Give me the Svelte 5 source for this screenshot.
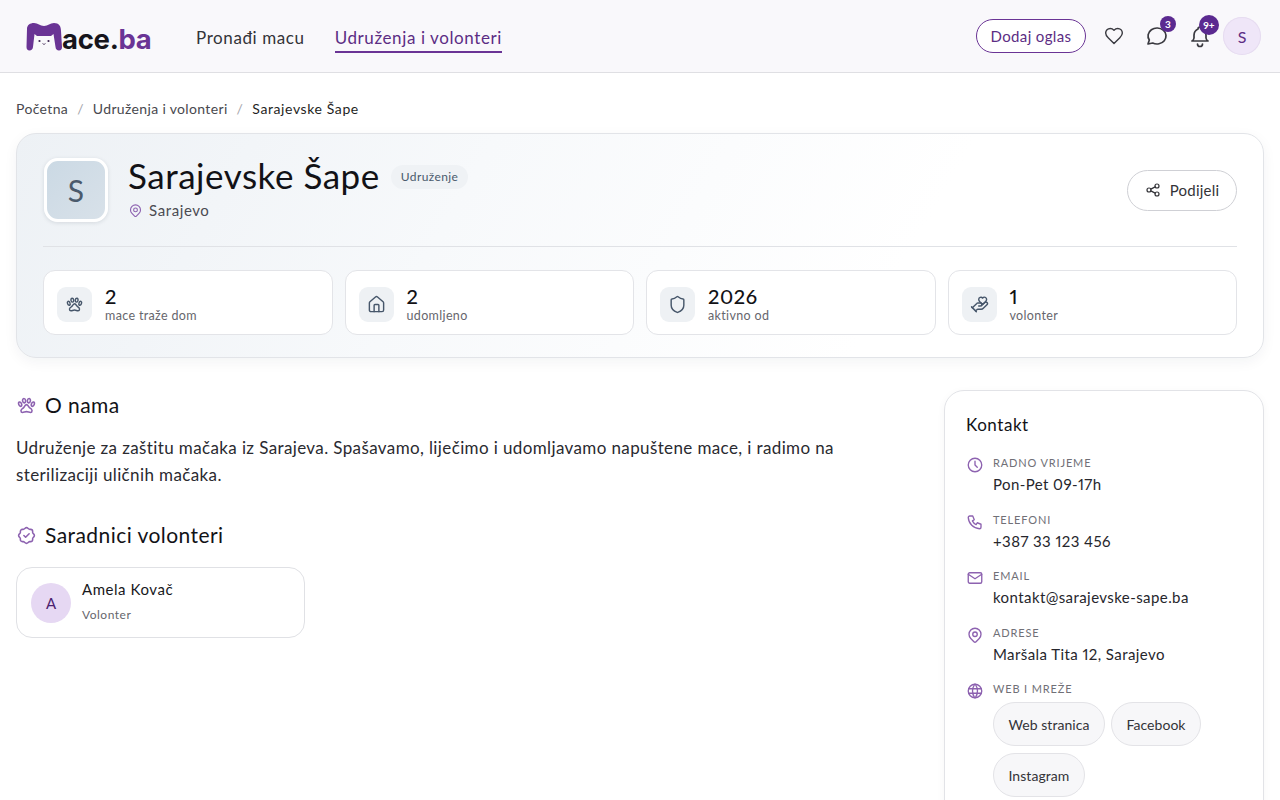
<script>
	const stats = [
		{ icon: 'paw', value: '2', label: 'mace traže dom' },
		{ icon: 'home', value: '2', label: 'udomljeno' },
		{ icon: 'shield', value: '2026', label: 'aktivno od' },
		{ icon: 'hand', value: '1', label: 'volonter' }
	];
	const contacts = [
		{ icon: 'clock', label: 'Radno vrijeme', value: 'Pon-Pet 09-17h' },
		{ icon: 'phone', label: 'Telefoni', value: '+387 33 123 456' },
		{ icon: 'mail', label: 'Email', value: 'kontakt@sarajevske-sape.ba' },
		{ icon: 'pin', label: 'Adrese', value: 'Maršala Tita 12, Sarajevo' }
	];
	const links = ['Web stranica', 'Facebook', 'Instagram'];
</script>

{#snippet icon(name)}
	<svg class="ic" viewBox="0 0 24 24" fill="none" stroke="currentColor" stroke-width="1.8" stroke-linecap="round" stroke-linejoin="round">
		{#if name === 'paw'}
			<path d="M14.7 13.5c-1.1-2-1.441-2.5-2.7-2.5-1.259 0-1.736.755-2.836 2.747-.942 1.703-2.846 1.845-3.321 3.291-.097.265-.145.677-.143.962 0 1.176.787 2 1.8 2 1.259 0 3-1 4.5-1s3.241 1 4.5 1c1.013 0 1.8-.823 1.8-2 0-.285-.049-.697-.146-.962-.475-1.451-2.512-1.744-3.454-3.538z" />
			<path d="M20.188 8.082a1.039 1.039 0 0 0-.406-.082h-.015c-.735.012-1.56.75-1.993 1.866-.519 1.335-.28 2.7.538 3.052.129.055.267.082.406.082.739 0 1.575-.742 2.011-1.866.516-1.335.273-2.7-.54-3.052z" />
			<path d="M9.474 9c.055 0 .109 0 .163-.011.944-.128 1.533-1.346 1.32-2.722C10.754 4.97 9.91 4 9.025 4c-.055 0-.109 0-.163.011-.944.128-1.533 1.346-1.32 2.722C7.746 8.026 8.59 9 9.475 9z" />
			<path d="M16.456 6.733c.214-1.376-.375-2.594-1.32-2.722A1.164 1.164 0 0 0 14.974 4c-.885 0-1.728.97-1.93 2.267-.214 1.376.375 2.594 1.32 2.722.054.007.108.011.162.011.885 0 1.73-.974 1.93-2.267z" />
			<path d="M5.69 12.918c.816-.352 1.054-1.719.536-3.052C5.79 8.742 4.955 8 4.217 8c-.14 0-.277.027-.407.082-.816.352-1.054 1.719-.536 3.052C3.71 12.258 4.545 13 5.283 13c.14 0 .277-.027.407-.082z" />
		{:else if name === 'home'}
			<path d="M15 21v-8a1 1 0 0 0-1-1h-4a1 1 0 0 0-1 1v8" />
			<path d="M3 10a2 2 0 0 1 .709-1.528l7-5.999a2 2 0 0 1 2.582 0l7 5.999A2 2 0 0 1 21 10v9a2 2 0 0 1-2 2H5a2 2 0 0 1-2-2z" />
		{:else if name === 'shield'}
			<path d="M20 13c0 5-3.5 7.5-7.66 8.95a1 1 0 0 1-.67-.01C7.5 20.5 4 18 4 13V6a1 1 0 0 1 1-1c2 0 4.5-1.2 6.24-2.72a1.17 1.17 0 0 1 1.52 0C14.51 3.81 17 5 19 5a1 1 0 0 1 1 1z" />
		{:else if name === 'hand'}
			<path d="M11 14h2a2 2 0 1 0 0-4h-3c-.6 0-1.1.2-1.4.6L3 16" />
			<path d="m7 20 1.6-1.4c.3-.4.8-.6 1.4-.6h4c1.1 0 2.1-.4 2.8-1.2l4.6-4.4a2 2 0 0 0-2.75-2.91l-4.2 3.9" />
			<path d="m2 15 6 6" />
			<path d="M19.5 8.5c.7-.7 1.5-1.6 1.5-2.7A2.73 2.73 0 0 0 16 4a2.78 2.78 0 0 0-5 1.8c0 1.2.8 2 1.5 2.8L16 12Z" />
		{:else if name === 'pin'}
			<path d="M9 11a3 3 0 1 0 6 0 3 3 0 0 0-6 0" />
			<path d="M17.657 16.657l-4.243 4.243a2 2 0 0 1-2.827 0l-4.244-4.243a8 8 0 1 1 11.314 0z" />
		{:else if name === 'clock'}
			<circle cx="12" cy="12" r="9" />
			<path d="M12 7v5l3 3" />
		{:else if name === 'phone'}
			<path d="M5 4h4l2 5-2.500 1.500a11 11 0 0 0 5 5l1.500-2.500 5 2v4a2 2 0 0 1-2 2A16 16 0 0 1 3 6a2 2 0 0 1 2-2" />
		{:else if name === 'mail'}
			<rect x="3" y="5" width="18" height="14" rx="2" />
			<path d="M3 7l9 6 9-6" />
		{:else if name === 'globe'}
			<circle cx="12" cy="12" r="9" />
			<path d="M3.600 9h16.800M3.600 15h16.800" />
			<path d="M11.500 3a17 17 0 0 0 0 18M12.500 3a17 17 0 0 1 0 18" />
		{:else if name === 'badge'}
			<path d="M5 7.200A2.200 2.200 0 0 1 7.200 5h1a2.200 2.200 0 0 0 1.550-.64l.7-.7a2.200 2.200 0 0 1 3.120 0l.7.7c.412.41.97.64 1.550.64h1A2.200 2.200 0 0 1 19 7.200v1c0 .58.23 1.138.64 1.550l.7.7a2.200 2.200 0 0 1 0 3.120l-.7.7a2.200 2.200 0 0 0-.64 1.550v1a2.200 2.200 0 0 1-2.200 2.200h-1a2.200 2.200 0 0 0-1.550.64l-.7.7a2.200 2.200 0 0 1-3.120 0l-.7-.7a2.200 2.200 0 0 0-1.550-.64h-1A2.200 2.200 0 0 1 5 16.800v-1a2.200 2.200 0 0 0-.64-1.550l-.7-.7a2.200 2.200 0 0 1 0-3.120l.7-.7A2.200 2.200 0 0 0 5 8.200v-1" />
			<path d="M9 12l2 2 4-4" />
		{:else if name === 'heart'}
			<path d="M19 14c1.490-1.460 3-3.210 3-5.500A5.500 5.500 0 0 0 16.500 3c-1.760 0-3 .5-4.500 2-1.500-1.500-2.740-2-4.500-2A5.500 5.500 0 0 0 2 8.500c0 2.300 1.500 4.050 3 5.500l7 7Z" />
		{:else if name === 'chat'}
			<path d="M3 20l1.300-3.900c-2.324-3.437-1.426-7.872 2.100-10.374 3.526-2.501 8.590-2.296 11.845.48 3.255 2.777 3.695 7.266 1.029 10.501-2.666 3.235-7.615 4.215-11.574 2.293L3 20" />
		{:else if name === 'bell'}
			<path d="M10 5a2 2 0 1 1 4 0 7 7 0 0 1 4 6v3a4 4 0 0 0 2 3H4a4 4 0 0 0 2-3v-3a7 7 0 0 1 4-6" />
			<path d="M9.500 20a2.500 2.500 0 0 0 5 0" />
		{:else if name === 'share'}
			<circle cx="6" cy="12" r="3" />
			<circle cx="18" cy="6" r="3" />
			<circle cx="18" cy="18" r="3" />
			<path d="M8.700 10.700l6.600-3.400M8.700 13.300l6.600 3.400" />
		{/if}
	</svg>
{/snippet}

<div class="page">
	<header class="topbar">
		<a class="logo" href="#top">
			<svg class="logo-mark" viewBox="0 0 36 28">
				<path fill="#6a3495" d="M1 6C1 2 4 0 8 0c4 0 6 3 10 3s6-3 10-3c5 0 7 3 7 8l1 16c0 2-1 3.500-3 3.500s-3.300-1.500-3.500-3.500L27.500 11 25 13h-14l-2.500-2L7 24c-.2 2-1.500 3.500-3.500 3.500S.5 26 .5 24z" />
				<circle cx="13.500" cy="18" r="1.100" fill="#3c2350" />
				<circle cx="22.500" cy="18" r="1.100" fill="#3c2350" />
				<path d="M16.500 20.500l1.500 1 1.500-1" fill="none" stroke="#3c2350" stroke-width=".8" />
			</svg>
			<span class="logo-text">ace.<b>ba</b></span>
		</a>
		<nav class="nav">
			<a href="#top">Pronađi macu</a>
			<a href="#top" class="active">Udruženja i volonteri</a>
		</nav>
		<div class="actions">
			<button class="add">Dodaj oglas</button>
			<span class="tool heart">{@render icon('heart')}</span>
			<span class="tool chat">{@render icon('chat')}<i class="badge">3</i></span>
			<span class="tool bell">{@render icon('bell')}<i class="badge wide">9+</i></span>
			<span class="me">S</span>
		</div>
	</header>

	<main class="content">
		<div class="crumbs">
			<a href="#top">Početna</a>
			<span class="sep">/</span>
			<a href="#top">Udruženja i volonteri</a>
			<span class="sep">/</span>
			<span class="current">Sarajevske Šape</span>
		</div>

		<section class="hero">
			<div class="hero-top">
				<div class="hero-logo"><span>S</span></div>
				<div class="hero-info">
					<div class="title-row">
						<h1>Sarajevske Šape</h1>
						<span class="tag">Udruženje</span>
					</div>
					<div class="place">{@render icon('pin')}Sarajevo</div>
				</div>
				<button class="share">{@render icon('share')}Podijeli</button>
			</div>
			<div class="stats">
				{#each stats as s}
					<div class="stat">
						<span class="stat-icon">{@render icon(s.icon)}</span>
						<div>
							<div class="stat-value">{s.value}</div>
							<div class="stat-label">{s.label}</div>
						</div>
					</div>
				{/each}
			</div>
		</section>

		<div class="columns">
			<div class="left">
				<h2>{@render icon('paw')}O nama</h2>
				<p class="about">
					Udruženje za zaštitu mačaka iz Sarajeva. Spašavamo, liječimo i udomljavamo napuštene mace, i radimo na
					sterilizaciji uličnih mačaka.
				</p>
				<h2 class="second">{@render icon('badge')}Saradnici volonteri</h2>
				<div class="member">
					<span class="member-av">A</span>
					<div class="member-text">
						<div class="member-name">Amela Kovač</div>
						<div class="member-role">Volonter</div>
					</div>
				</div>
			</div>

			<aside class="contact">
				<h3>Kontakt</h3>
				{#each contacts as c}
					<div class="row">
						{@render icon(c.icon)}
						<div>
							<div class="row-label">{c.label}</div>
							<div class="row-value">{c.value}</div>
						</div>
					</div>
				{/each}
				<div class="row">
					{@render icon('globe')}
					<div>
						<div class="row-label">Web i mreže</div>
						<div class="chips">
							{#each links as l}
								<a class="chip" href="#top">{l}</a>
							{/each}
						</div>
					</div>
				</div>
			</aside>
		</div>
	</main>
</div>

<style>
	:global(html) {
		overflow: hidden;
	}
	:global(body) {
		background: #fff;
	}
	.page {
		font-family: 'Lato', 'Noto Sans', sans-serif;
		font-variant-numeric: proportional-nums;
		color: #1f1f24;
		height: 800px;
		overflow: hidden;
	}
	a {
		color: inherit;
		text-decoration: none;
	}
	button {
		font-family: inherit;
		font-variant-numeric: inherit;
		cursor: pointer;
	}
	.ic {
		width: 20px;
		height: 20px;
		flex-shrink: 0;
		display: block;
	}

	.topbar {
		display: flex;
		align-items: center;
		height: 72px;
		background: #f9f8fb;
		border-bottom: 1px solid #dfdfe3;
		padding: 0 19px 0 26px;
	}
	.logo {
		display: flex;
		align-items: flex-end;
		width: 170px;
		height: 28px;
		margin-top: 2px;
	}
	.logo-mark {
		width: 36px;
		height: 28px;
		flex-shrink: 0;
	}
	.logo-text {
		font-family: 'Inter', sans-serif;
		font-weight: 700;
		font-size: 27.5px;
		line-height: 24px;
		letter-spacing: -0.3px;
		color: #17151c;
	}
	.logo-text b {
		color: #6a3495;
		font-weight: 700;
	}
	.nav {
		display: flex;
		gap: 30px;
		font-size: 17px;
		letter-spacing: 0.6px;
		color: #333338;
		margin-top: -2px;
	}
	.nav a {
		padding: 6px 0 3px;
		border-bottom: 2px solid transparent;
		margin-top: 3px;
	}
	.nav a.active {
		color: #5c2d84;
		border-bottom-color: #6a3495;
	}
	.actions {
		margin-left: auto;
		display: flex;
		align-items: center;
	}
	.add {
		height: 34px;
		width: 110px;
		border: 1px solid #6a3495;
		border-radius: 17px;
		background: #fff;
		color: #5c2d84;
		font-size: 15px;
		letter-spacing: 0.36px;
		padding: 0;
		margin-right: 18px;
	}
	.tool {
		position: relative;
		color: #3a3a40;
		margin-right: 23px;
	}
	.tool .ic {
		stroke-width: 1.7;
	}
	.tool.chat .ic,
	.tool.bell .ic {
		width: 24px;
		height: 24px;
		margin: -2px;
	}
	.tool.bell {
		margin-right: 13px;
	}
	.badge {
		position: absolute;
		z-index: 1;
		top: -10px;
		right: -9px;
		width: 16px;
		height: 16px;
		border-radius: 50%;
		background: #5b2a90;
		color: #fff;
		font-style: normal;
		font-weight: 700;
		font-size: 10px;
		line-height: 16px;
		text-align: center;
	}
	.badge.wide {
		width: 20px;
		height: 20px;
		line-height: 20px;
		top: -11px;
		right: -9px;
	}
	.me {
		width: 38px;
		height: 38px;
		border-radius: 50%;
		background: #efe6f8;
		box-shadow: inset 0 0 0 1px #e6dcf0;
		color: #5c2d84;
		font-size: 16px;
		display: flex;
		align-items: center;
		justify-content: center;
	}

	.content {
		padding: 0 16px;
	}
	.crumbs {
		display: flex;
		align-items: center;
		gap: 9px;
		height: 60px;
		box-sizing: border-box;
		padding-top: 11px;
		font-size: 14px;
		letter-spacing: 0.35px;
		color: #48484e;
	}
	.sep {
		color: #a5a5ab;
	}
	.current {
		color: #1f1f24;
		letter-spacing: 0.6px;
	}

	.hero {
		border: 1px solid #e2e4e8;
		border-radius: 20px;
		padding: 24px 26px 22px;
		background: linear-gradient(120deg, #edf1f5 0%, #f7f9fb 35%, #fff 70%);
		box-shadow: 0 4px 14px rgba(20, 30, 50, 0.05);
	}
	.hero-top {
		display: flex;
		align-items: center;
		padding-bottom: 24px;
		border-bottom: 1px solid #e0e2e6;
		margin-bottom: 23px;
	}
	.hero-logo {
		width: 64px;
		height: 64px;
		box-sizing: border-box;
		border: 3px solid #fff;
		border-radius: 14px;
		background: linear-gradient(135deg, #cbd9e4, #d8e1e9);
		box-shadow: 0 1px 4px rgba(20, 30, 50, 0.12);
		display: flex;
		align-items: center;
		justify-content: center;
		color: #4a5a6c;
		font-size: 30px;
		margin-left: 1px;
	}
	.hero-info {
		margin-left: 20px;
		margin-top: -6px;
	}
	.title-row {
		display: flex;
		align-items: center;
		gap: 11px;
	}
	h1 {
		margin: 0;
		font-size: 35px;
		line-height: 40px;
		font-weight: 400;
		letter-spacing: 0.53px;
		color: #121216;
	}
	.tag {
		font-size: 12px;
		letter-spacing: 0.4px;
		background: #eff2f5;
		color: #4a5a6c;
		height: 24px;
		line-height: 24px;
		padding: 0 10px;
		border-radius: 12px;
		margin-top: 4px;
	}
	.place {
		display: flex;
		align-items: center;
		gap: 6px;
		font-size: 15px;
		letter-spacing: 0.6px;
		color: #4b4b52;
		margin-top: 6px;
	}
	.place .ic {
		width: 15px;
		height: 15px;
		color: #8d62b0;
	}
	.share {
		margin-left: auto;
		width: 110px;
		height: 41px;
		display: flex;
		align-items: center;
		justify-content: center;
		gap: 9px;
		border: 1px solid #cfd0d5;
		border-radius: 21px;
		background: #fff;
		color: #333338;
		font-size: 15px;
		letter-spacing: 0.2px;
		padding: 0;
	}
	.share .ic {
		width: 16px;
		height: 16px;
	}

	.stats {
		display: grid;
		grid-template-columns: repeat(4, 1fr);
		gap: 12px;
	}
	.stat {
		display: flex;
		align-items: center;
		gap: 13px;
		background: #fff;
		border: 1px solid #e3e4e8;
		border-radius: 12px;
		padding: 13px 13px 10px;
	}
	.stat-icon {
		width: 35px;
		height: 35px;
		border-radius: 9px;
		background: #eef1f4;
		color: #46566a;
		display: flex;
		align-items: center;
		justify-content: center;
	}
	.stat-icon .ic {
		width: 19px;
		height: 19px;
	}
	.stat-value {
		font-size: 20px;
		line-height: 24px;
		font-weight: 500;
		letter-spacing: 0.6px;
		color: #121216;
	}
	.stat-label {
		font-size: 12.5px;
		line-height: 16px;
		letter-spacing: 0.35px;
		color: #66666d;
	}

	.columns {
		display: grid;
		grid-template-columns: 1fr 320px;
		gap: 40px;
		margin-top: 32px;
	}
	h2 {
		display: flex;
		align-items: center;
		gap: 8px;
		margin: 0;
		font-size: 21px;
		line-height: 30px;
		font-weight: 400;
		letter-spacing: 0.44px;
		color: #121216;
	}
	h2 .ic {
		width: 21px;
		height: 21px;
		color: #8d62b0;
	}
	.about {
		margin: 14px 0 0;
		max-width: 830px;
		font-size: 17px;
		line-height: 27px;
		letter-spacing: 0.38px;
		color: #2a2a30;
	}
	.second {
		margin-top: 32px;
	}
	.member {
		display: flex;
		align-items: center;
		gap: 11px;
		width: 289px;
		height: 71px;
		box-sizing: border-box;
		margin-top: 17px;
		padding: 0 14px;
		border: 1px solid #e0e1e5;
		border-radius: 16px;
	}
	.member-text {
		margin-top: -3px;
	}
	.member-av {
		width: 40px;
		height: 40px;
		border-radius: 50%;
		background: #e6d8f3;
		color: #4c2270;
		font-size: 15px;
		display: flex;
		align-items: center;
		justify-content: center;
	}
	.member-name {
		font-size: 15px;
		line-height: 20px;
		letter-spacing: 0.55px;
		color: #18181c;
	}
	.member-role {
		font-size: 12px;
		line-height: 16px;
		letter-spacing: 0.5px;
		color: #66666d;
		margin-top: 8px;
	}

	.contact {
		border: 1px solid #e2e3e7;
		border-radius: 20px;
		padding: 21px;
		box-shadow: 0 2px 8px rgba(20, 30, 50, 0.04);
		height: 500px;
	}
	h3 {
		margin: 0 0 17px;
		font-size: 17px;
		line-height: 26px;
		font-weight: 400;
		letter-spacing: 0.55px;
		color: #121216;
	}
	.row {
		display: flex;
		gap: 9px;
		margin-bottom: 17.5px;
	}
	.row .ic {
		width: 18px;
		height: 18px;
		margin-top: 1px;
		color: #8d62b0;
	}
	.row-label {
		font-size: 11px;
		line-height: 16px;
		letter-spacing: 0.85px;
		text-transform: uppercase;
		color: #707077;
	}
	.row-value {
		font-size: 15px;
		line-height: 20px;
		letter-spacing: 0.42px;
		color: #26262c;
		margin-top: 3px;
	}
	.chips {
		display: flex;
		flex-wrap: wrap;
		gap: 7px 6px;
		margin-top: 5px;
		width: 240px;
	}
	.chip {
		height: 44px;
		box-sizing: border-box;
		display: flex;
		align-items: center;
		padding: 0 14.5px;
		border: 1px solid #e3e3e7;
		border-radius: 22px;
		background: #f7f7f9;
		font-size: 14px;
		letter-spacing: 0.05px;
		color: #333338;
	}
</style>
